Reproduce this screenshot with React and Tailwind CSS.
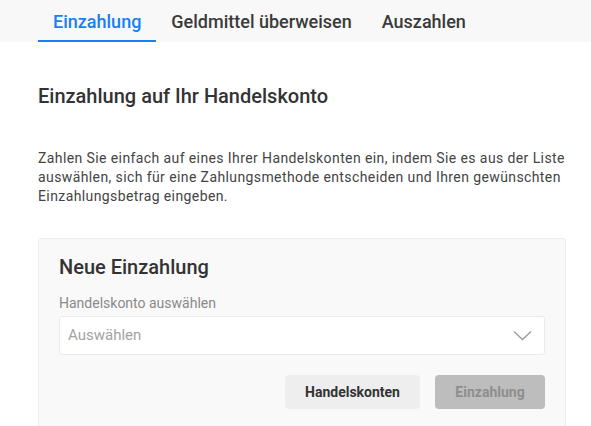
import React from "react";

export default function App() {
  return (
    <div className="w-[591px] h-[426px] overflow-hidden bg-white font-['Roboto',sans-serif] text-[#333333]">
      <div className="h-[42px] bg-[#f8f8f8] pl-[38px] flex items-end">
        <div className="flex">
          <div className="px-[15px] h-[42px] flex items-center border-b-2 border-[#1a7ef5] text-[#1a7ef5] text-[18px] font-medium pt-[2px]">
            Einzahlung
          </div>
          <div className="px-[15px] h-[42px] flex items-center text-[18px] font-medium text-[#3a3a3a] pb-0">
            Geldmittel überweisen
          </div>
          <div className="px-[15px] h-[42px] flex items-center text-[18px] font-medium text-[#3a3a3a]">
            Auszahlen
          </div>
        </div>
      </div>

      <div className="pl-[38px] w-[566px]">
        <h1 className="mt-[40px] text-[20px] font-medium leading-[28px] text-[#333333]">
          Einzahlung auf Ihr Handelskonto
        </h1>
        <p className="mt-[39px] mr-[-12px] text-[14px] tracking-[0.4px] leading-[19px] text-[#444444]">
          Zahlen Sie einfach auf eines Ihrer Handelskonten ein, indem Sie es aus der Liste auswählen, sich für eine Zahlungsmethode entscheiden und Ihren gewünschten Einzahlungsbetrag eingeben.
        </p>

        <div className="mt-[32px] rounded-[4px] border border-[#ececec] bg-[#f9f9f9] px-[20px] pt-[14px] pb-[20px]">
          <h2 className="text-[20px] font-medium leading-[28px] text-[#333333]">Neue Einzahlung</h2>
          <div className="mt-[12px] text-[14px] leading-[20px] text-[#8a8a8a]">Handelskonto auswählen</div>
          <div className="mt-[3px] h-[39px] rounded-[3px] border border-[#ebebeb] bg-white flex items-center justify-between pl-[8px] pr-[12px]">
            <span className="text-[15px] text-[#a3a3a3]">Auswählen</span>
            <svg width="19" height="11" viewBox="0 0 19 11" fill="none">
              <path d="M1 1.5 L9.5 9.5 L18 1.5" stroke="#9a9a9a" strokeWidth="1.3" />
            </svg>
          </div>
          <div className="mt-[20px] flex justify-end gap-[15px]">
            <button className="h-[34px] w-[135px] rounded-[4px] bg-[#eeeeee] text-[14px] font-bold text-[#333333]">
              Handelskonten
            </button>
            <button className="h-[34px] w-[110px] rounded-[4px] bg-[#bdbdbd] text-[14px] font-bold text-[#8e8e8e]">
              Einzahlung
            </button>
          </div>
        </div>
      </div>
    </div>
  );
}
